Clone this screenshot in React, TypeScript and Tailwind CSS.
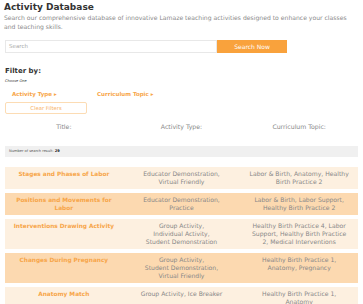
import React from 'react';

type Row = { title: string[]; type: string[]; topic: string[]; dark?: boolean };

// line breaks follow the original layout
const rows: Row[] = [
  {
    title: ['Stages and Phases of Labor'],
    type: ['Educator Demonstration,', 'Virtual Friendly'],
    topic: ['Labor & Birth, Anatomy, Healthy', 'Birth Practice 2'],
  },
  {
    title: ['Positions and Movements for', 'Labor'],
    type: ['Educator Demonstration,', 'Practice'],
    topic: ['Labor & Birth, Labor Support,', 'Healthy Birth Practice 2'],
    dark: true,
  },
  {
    title: ['Interventions Drawing Activity'],
    type: ['Group Activity,', 'Individual Activity,', 'Student Demonstration'],
    topic: ['Healthy Birth Practice 4, Labor', 'Support, Healthy Birth Practice', '2, Medical Interventions'],
  },
  {
    title: ['Changes During Pregnancy'],
    type: ['Group Activity,', 'Student Demonstration,', 'Virtual Friendly'],
    topic: ['Healthy Birth Practice 1,', 'Anatomy, Pregnancy'],
    dark: true,
  },
  {
    title: ['Anatomy Match'],
    type: ['Group Activity, Ice Breaker'],
    topic: ['Healthy Birth Practice 1,', 'Anatomy'],
  },
];

function Lines({ lines }: { lines: string[] }) {
  return (
    <>
      {lines.map((l) => (
        <div key={l} className="whitespace-nowrap">{l}</div>
      ))}
    </>
  );
}

export default function App() {
  return (
    <div className="w-[363px] h-[304px] overflow-hidden bg-white px-[5px] pt-[1px] text-[#777]" style={{ fontFamily: '"DejaVu Sans", sans-serif' }}>
      <h1 className="-ml-[1px] text-[9px] font-bold leading-[12px] text-[#333]">Activity Database</h1>
      <p className="-ml-[1px] w-[350px] text-[6.1px] leading-[9px] text-[#8a8a8a]">
        Search our comprehensive database of innovative Lamaze teaching activities designed to enhance your classes and teaching skills.
      </p>

      <div className="mt-[9px] flex h-[13px]">
        <div className="w-[212px] border border-[#e8e8e8] px-[3px] text-[5.5px] leading-[11px] text-[#aaa]">Search</div>
        <div className="w-[70px] bg-[#f9a23c] text-center text-[6px] leading-[13px] text-white">Search Now</div>
      </div>

      <div className="mt-[13px] text-[7px] font-bold leading-[10px] text-[#333]">Filter by:</div>
      <div className="mt-[2px] text-[3.6px] italic leading-[6px] text-[#333]">Choose One</div>

      <div className="mt-[6px] flex text-[5.5px] font-bold leading-[8px] text-[#f7a548]">
        <span className="ml-[7px] w-[85px]">Activity Type ▸</span>
        <span>Curriculum Topic ▸</span>
      </div>
      <div className="mt-[4px] h-[12px] w-[82px] rounded-[2px] border border-[#fcdcb4] text-center text-[5.3px] leading-[10px] text-[#f7b46a]">
        Clear Filters
      </div>

      <div className="mt-[9px] grid grid-cols-3 text-center text-[6.2px] leading-[8px] text-[#888]">
        <span>Title:</span>
        <span>Activity Type:</span>
        <span>Curriculum Topic:</span>
      </div>

      <div className="mt-[15px] h-[11px] bg-[#f0f0f0] px-[4px] text-[3.6px] leading-[11px] text-[#555]">
        Number of search result: <b className="text-[#222]">29</b>
      </div>

      <div className="mt-[10px] flex flex-col gap-[4px]">
        {rows.map((r) => (
          <div
            key={r.title[0]}
            className={`grid grid-cols-3 pt-[3px] pb-[3px] text-center text-[6.1px] leading-[8px] ${r.dark ? 'bg-[#fcd9b0]' : 'bg-[#fdf0e0]'}`}
          >
            <div className="text-[5.8px] font-bold text-[#f7a548]"><Lines lines={r.title} /></div>
            <div className="text-[#888]"><Lines lines={r.type} /></div>
            <div className="text-[#888]"><Lines lines={r.topic} /></div>
          </div>
        ))}
      </div>
    </div>
  );
}
